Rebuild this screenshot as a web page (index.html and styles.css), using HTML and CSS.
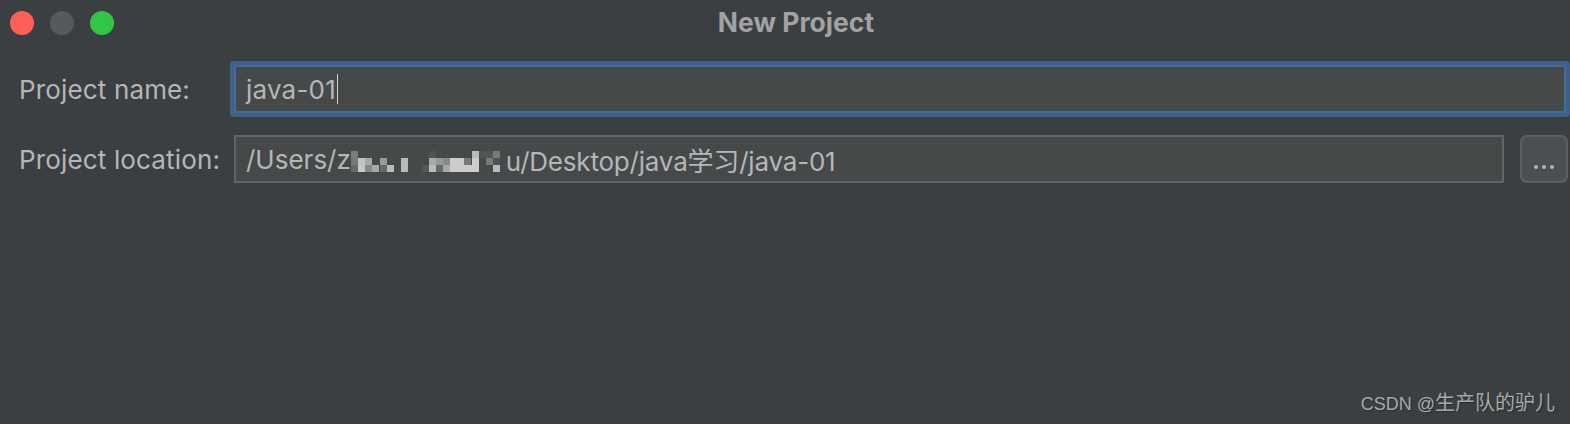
FILE: index.html
```html
<!DOCTYPE html>
<html lang="en">
<head>
    <meta charset="UTF-8">
    <meta name="viewport" content="width=device-width, initial-scale=1.0">
    <link rel="stylesheet" href="styles.css">
    <title>New Project</title>
</head>
<body>
    <div class="dialog">
        <div class="titlebar">
            <div class="lights">
                <span class="light light-close"></span>
                <span class="light light-min"></span>
                <span class="light light-max"></span>
            </div>
            <div class="title">New Project</div>
        </div>
        <div class="form">
            <label class="label">Project name:</label>
            <div class="field field-focus">java-01<span class="caret"></span></div>
            <label class="label">Project location:</label>
            <div class="field">/Users/z<svg class="mosaic" width="150" height="21" viewBox="0 0 150 21">
                <rect x="0" y="0" width="7" height="7" fill="#7a7d7e"/>
                <rect x="78" y="0" width="7" height="7" fill="#505354"/>
                <rect x="121" y="0" width="7" height="7" fill="#bdbdbd"/>
                <rect x="128" y="0" width="14" height="7" fill="#515455"/>
                <rect x="142" y="0" width="7" height="7" fill="#77797a"/>
                <rect x="0" y="7" width="7" height="7" fill="#777a7b"/>
                <rect x="7" y="7" width="7" height="7" fill="#c4c4c4"/>
                <rect x="14" y="7" width="7" height="7" fill="#a8a9a9"/>
                <rect x="29" y="7" width="7" height="7" fill="#999b9b"/>
                <rect x="50" y="7" width="7" height="7" fill="#bbbbbb"/>
                <rect x="78" y="7" width="7" height="7" fill="#a8a9a9"/>
                <rect x="85" y="7" width="7" height="7" fill="#98999a"/>
                <rect x="92" y="7" width="7" height="7" fill="#88898a"/>
                <rect x="99" y="7" width="14" height="7" fill="#cccccc"/>
                <rect x="113" y="7" width="7" height="7" fill="#77797a"/>
                <rect x="121" y="7" width="7" height="7" fill="#cccccc"/>
                <rect x="135" y="7" width="7" height="7" fill="#77797a"/>
                <rect x="142" y="7" width="7" height="7" fill="#505354"/>
                <rect x="0" y="14" width="7" height="7" fill="#66696a"/>
                <rect x="7" y="14" width="7" height="7" fill="#c8c8c8"/>
                <rect x="14" y="14" width="7" height="7" fill="#88898a"/>
                <rect x="21" y="14" width="7" height="7" fill="#a8a9a9"/>
                <rect x="29" y="14" width="7" height="7" fill="#66696a"/>
                <rect x="36" y="14" width="7" height="7" fill="#bbbbbb"/>
                <rect x="50" y="14" width="7" height="7" fill="#bbbbbb"/>
                <rect x="71" y="14" width="7" height="7" fill="#555859"/>
                <rect x="78" y="14" width="7" height="7" fill="#bbbbbb"/>
                <rect x="85" y="14" width="7" height="7" fill="#66696a"/>
                <rect x="92" y="14" width="7" height="7" fill="#a8a9a9"/>
                <rect x="99" y="14" width="29" height="7" fill="#cccccc"/>
                <rect x="142" y="14" width="7" height="7" fill="#bbbbbb"/>
            </svg><span class="path-rest">u/Desktop/java学习/java-01</span></div>
            <button class="browse"><span></span><span></span><span></span></button>
        </div>
        <div class="watermark"><span class="watermark-latin">CSDN @</span>生产队的驴儿</div>
    </div>
</body>
</html>
```

FILE: styles.css
```css
html, body {
    margin: 0;
    padding: 0;
    height: 100%;
    overflow: hidden;
    background: #3c3f41;
}

.dialog {
    position: relative;
    height: 424px;
    font-family: "Inter", "Noto Sans CJK SC", sans-serif;
    color: #b4b6b7;
}

.titlebar {
    display: grid;
    grid-template-columns: 1fr auto 1fr;
    align-items: center;
    height: 46px;
    padding-left: 10px;
}

.lights {
    display: flex;
    gap: 16px;
}

.light {
    width: 24px;
    height: 24px;
    border-radius: 50%;
}

.light-close { background: #ff5f57; }
.light-min { background: #58595b; }
.light-max { background: #30c748; }

.title {
    padding: 0 0 3px 12px;
    font-size: 26.5px;
    font-weight: 700;
    color: #a0a2a4;
}

.form {
    display: grid;
    grid-template-columns: 199px 1fr 48px;
    column-gap: 16px;
    row-gap: 22px;
    align-items: center;
    padding: 19px 2px 0 19px;
}

.label {
    font-size: 26px;
    letter-spacing: 0.15px;
    white-space: nowrap;
}

.field {
    display: flex;
    align-items: center;
    box-sizing: border-box;
    height: 48px;
    padding-left: 10px;
    background: #45494a;
    border: 2px solid #646464;
    font-size: 26px;
    white-space: nowrap;
}

.field-focus {
    grid-column: 2 / 4;
    margin-right: 2px;
    border: 2px solid #466a90;
    box-shadow: 0 0 0 4px #3d618a;
    border-radius: 1px;
    letter-spacing: 0.2px;
}

.caret {
    width: 1px;
    height: 30px;
    margin-left: 1px;
    background: #d0d0d0;
}

.mosaic {
    flex: none;
    margin: 4px 5px 0 0;
}

.path-rest {
    letter-spacing: -0.2px;
}

.browse {
    display: flex;
    justify-content: center;
    gap: 4px;
    box-sizing: border-box;
    width: 48px;
    height: 48px;
    padding: 28px 0 0;
    background: #4c5052;
    border: 2px solid #5e6060;
    border-radius: 7px;
}

.browse span {
    width: 4px;
    height: 4px;
    border-radius: 50%;
    background: #b4b6b7;
}

.watermark {
    position: absolute;
    right: 15px;
    bottom: 8px;
    font-family: "Liberation Sans", "Noto Sans CJK SC", sans-serif;
    font-size: 20px;
    color: #a8a9aa;
    text-shadow: 1px 1px 1px #2a2c2d;
}

.watermark-latin {
    font-size: 18px;
}
```
